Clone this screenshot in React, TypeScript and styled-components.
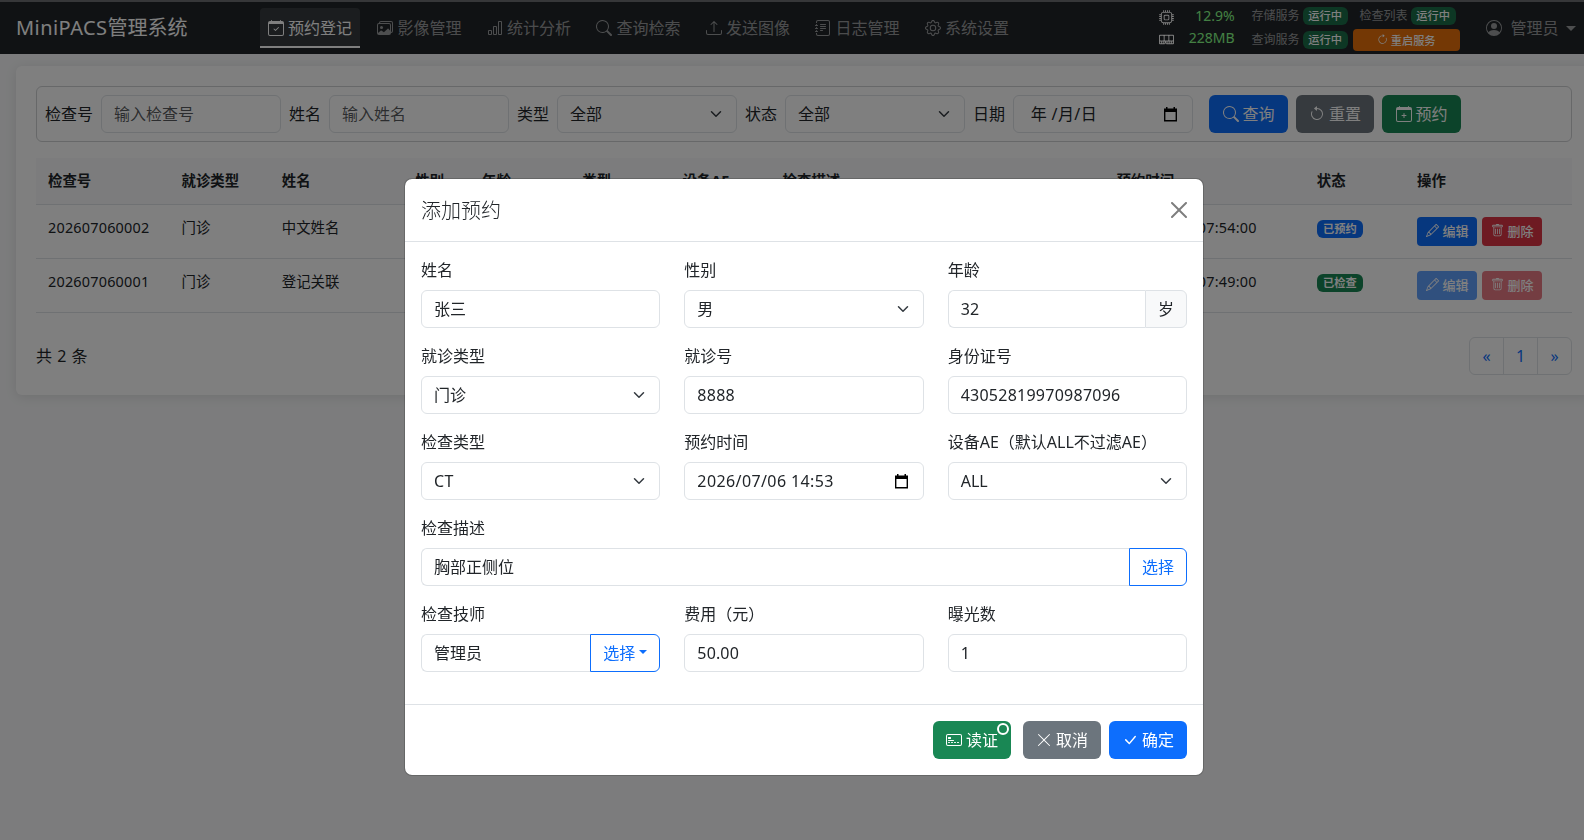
import React from "react";
import styled, { createGlobalStyle, css } from "styled-components";
import {
  BsArrowClockwise,
  BsArrowCounterclockwise,
  BsBarChart,
  BsCalendarCheck,
  BsCalendarPlus,
  BsCheckLg,
  BsCpu,
  BsCreditCard2Front,
  BsGear,
  BsImages,
  BsJournalText,
  BsMemory,
  BsPencil,
  BsPersonCircle,
  BsSearch,
  BsTrash,
  BsUpload,
  BsXLg,
} from "react-icons/bs";

const GlobalStyle = createGlobalStyle`
  *, *::before, *::after { box-sizing: border-box; }
  html { overflow: hidden; }
  body {
    margin: 0;
    height: 840px;
    overflow: hidden;
    background: #f8f9fa;
    color: #212529;
    font-family: "Noto Sans", "Noto Sans CJK SC", sans-serif;
    font-size: 16px;
    line-height: 24px;
  }
  button { font-family: inherit; }
`;

const Page = styled.div`
  width: 1608px;
  height: 840px;
  overflow: hidden;
`;

/* ---------- navbar ---------- */

const Navbar = styled.header`
  height: 54px;
  display: flex;
  align-items: center;
  background: #212529;
  border-top: 2px solid #6c6e72;
  padding: 0 0 0 16px;
`;

const Brand = styled.div`
  width: 244px;
  font-size: 20px;
  line-height: 30px;
  color: #fff;
  white-space: nowrap;
`;

const Nav = styled.nav`
  display: flex;
  gap: 9.8px;
`;

const NavItem = styled.a<{ $active?: boolean }>`
  width: 99.7px;
  height: 40px;
  display: flex;
  align-items: center;
  gap: 4px;
  padding: 0 8px;
  white-space: nowrap;
  color: ${(p) => (p.$active ? "#fff" : "rgba(255, 255, 255, 0.55)")};
  ${(p) =>
    p.$active &&
    css`
      background: rgba(255, 255, 255, 0.1);
      border-bottom: 2px solid #fff;
      border-radius: 4px 4px 0 0;
      padding-top: 2px;
    `}
  svg { flex: none; }
`;

const Metrics = styled.div`
  margin-left: 142px;
  width: 76px;
  display: grid;
  grid-template-rows: 22px 22px;
`;

const Metric = styled.div`
  display: flex;
  align-items: center;
  justify-content: space-between;
  font-size: 14px;
  line-height: 22px;
  color: #88ff88;
  svg { color: #fff; font-size: 15px; }
  span { padding-bottom: 2px; }
`;

const Services = styled.div`
  margin-left: 17px;
  width: 208px;
  display: grid;
  grid-template-columns: 101px 107px;
  grid-template-rows: 24px 24px;
  align-items: center;
`;

const Service = styled.div`
  display: flex;
  align-items: center;
  gap: 3px;
  font-size: 12px;
  color: rgba(255, 255, 255, 0.55);
  white-space: nowrap;
`;

const ServiceRight = styled(Service)`
  padding-left: 7px;
`;

const Badge = styled.span<{ $color: string }>`
  display: inline-flex;
  align-items: center;
  justify-content: center;
  height: 18px;
  width: 46px;
  border-radius: 6px;
  background: ${(p) => p.$color};
  color: #fff;
  font-size: 11.2px;
  font-weight: 700;
  line-height: 18px;
`;

const ServiceBadge = styled(Badge)`
  width: 45px;
  font-weight: 500;
`;

const RestartButton = styled.button`
  width: 107px;
  height: 22px;
  display: flex;
  align-items: center;
  justify-content: center;
  gap: 3px;
  border: 0;
  border-radius: 4px;
  background: #e8700a;
  color: #fff;
  font-size: 11.2px;
  font-weight: 500;
  padding: 0 0 1px;
`;

const UserMenu = styled.div`
  margin-left: 26px;
  display: flex;
  align-items: center;
  color: rgba(255, 255, 255, 0.55);
  white-space: nowrap;
  gap: 9px;
`;

const Caret = styled.span`
  border-top: 5px solid currentColor;
  border-left: 5px solid transparent;
  border-right: 5px solid transparent;
`;

const UserCaret = styled(Caret)`
  margin-left: -2px;
`;

/* ---------- main card ---------- */

const Card = styled.main`
  margin: 12px 16px 0;
  height: 329px;
  padding: 20px;
  background: #fff;
  border-radius: 6px;
  box-shadow: 0 2px 12px rgba(0, 0, 0, 0.1);
`;

const FilterBar = styled.section`
  height: 56px;
  display: flex;
  align-items: center;
  gap: 8px;
  padding: 0 8px;
  border: 1px solid #ced0d2;
  border-radius: 6px;
  white-space: nowrap;
`;

const Control = styled.div<{ $placeholder?: boolean; $joined?: boolean; $width?: number }>`
  height: 38px;
  ${(p) => (p.$width ? `width: ${p.$width}px; flex: none;` : "flex: 1; min-width: 0;")}
  display: flex;
  align-items: center;
  justify-content: space-between;
  padding: 0 12px;
  border: 1px solid #dee2e6;
  border-radius: ${(p) => (p.$joined ? "6px 0 0 6px" : "6px")};
  ${(p) => p.$joined && "border-right: 0;"}
  background: #fff;
  color: ${(p) => (p.$placeholder ? "rgba(33, 37, 41, 0.75)" : "#212529")};
`;

const Spaced = styled.span<{ $spacing?: number }>`
  letter-spacing: ${(p) => p.$spacing ?? 0.25}px;
`;

const Button = styled.button<{ $color: string; $width: number }>`
  position: relative;
  width: ${(p) => p.$width}px;
  height: 38px;
  display: flex;
  align-items: center;
  justify-content: center;
  gap: 4px;
  padding: 0;
  border: 0;
  border-radius: 6px;
  background: ${(p) => p.$color};
  color: #fff;
  font-size: 16px;
  line-height: 24px;
  svg { flex: none; }
`;

const FilterButtons = styled.div`
  display: flex;
  gap: 8px;
  margin-left: 8px;
`;

const Table = styled.div`
  margin-top: 16px;
  font-size: 14.4px;
  line-height: 21px;
`;

const Row = styled.div<{ $head?: boolean }>`
  display: grid;
  grid-template-columns: 4fr 3fr 4fr 2fr 3fr 3fr 3fr 10fr 6fr 3fr 5fr;
  height: ${(p) => (p.$head ? 47 : 54)}px;
  padding-top: 12px;
  border-bottom: 1px solid #dee2e6;
  background: ${(p) => (p.$head ? "#f8f9fa" : "#fff")};
  font-weight: ${(p) => (p.$head ? 700 : 400)};
`;

const Cell = styled.div`
  padding: 0 12px;
  min-width: 0;
  white-space: nowrap;
`;

const RowActions = styled.div`
  display: flex;
  gap: 5px;
`;

const SmallButton = styled.button<{ $color: string; $disabled?: boolean }>`
  width: 60px;
  height: 29px;
  display: flex;
  align-items: center;
  justify-content: center;
  gap: 4px;
  padding: 0 0 2px;
  border: 0;
  border-radius: 4px;
  background: ${(p) => p.$color};
  color: #fff;
  font-size: 13px;
  font-weight: 500;
  opacity: ${(p) => (p.$disabled ? 0.65 : 1)};
`;

const TableFooter = styled.div`
  margin-top: 24px;
  display: flex;
  justify-content: space-between;
  align-items: center;
  word-spacing: 1px;
`;

const Pager = styled.div`
  display: flex;
  width: 103px;
  height: 38px;
  border: 1px solid #dee2e6;
  border-radius: 6px;
  color: #0d6efd;
`;

const PageLink = styled.span`
  flex: 1;
  display: flex;
  align-items: center;
  justify-content: center;
  & + & { border-left: 1px solid #dee2e6; }
`;

/* ---------- modal ---------- */

const Backdrop = styled.div`
  position: fixed;
  top: 0;
  left: 0;
  width: 1608px;
  height: 840px;
  display: flex;
  justify-content: center;
  align-items: flex-start;
  padding-top: 178px;
  background: rgba(0, 0, 0, 0.5);
`;

const Dialog = styled.div`
  width: 800px;
  background: #fff;
  background-clip: padding-box;
  border: 1px solid rgba(0, 0, 0, 0.175);
  border-radius: 8px;
`;

const DialogHeader = styled.div`
  height: 63px;
  padding: 0 16px;
  display: flex;
  align-items: center;
  justify-content: space-between;
  border-bottom: 1px solid #dee2e6;
  font-size: 20px;
  line-height: 30px;
`;

const DialogTitle = styled.span`
  padding-top: 1px;
  font-weight: 300;
`;

const CloseIcon = styled.svg`
  width: 16px;
  height: 16px;
  opacity: 0.5;
`;

const FormGrid = styled.div`
  display: grid;
  grid-template-columns: repeat(3, 1fr);
  column-gap: 24px;
  row-gap: 16px;
  padding: 16px 16px 32px;
`;

const Field = styled.div<{ $wide?: boolean }>`
  display: grid;
  row-gap: 8px;
  grid-column: ${(p) => (p.$wide ? "1 / -1" : "auto")};
  min-width: 0;
  white-space: nowrap;
`;

const Group = styled.div`
  display: flex;
`;

const Unit = styled.span`
  width: 42px;
  height: 38px;
  display: flex;
  align-items: center;
  justify-content: center;
  border: 1px solid #dee2e6;
  border-radius: 0 6px 6px 0;
  background: #f8f9fa;
`;

const PickButton = styled.button<{ $width: number }>`
  width: ${(p) => p.$width}px;
  height: 38px;
  display: flex;
  align-items: center;
  justify-content: center;
  gap: 4px;
  padding: 0 0 2px;
  border: 1px solid #0d6efd;
  border-radius: 0 6px 6px 0;
  background: #fff;
  color: #0d6efd;
  font-size: 16px;
`;

const SmallCaret = styled(Caret)`
  border-top-width: 4px;
  border-left-width: 4px;
  border-right-width: 4px;
`;

const DialogFooter = styled.div`
  height: 71px;
  display: flex;
  justify-content: flex-end;
  align-items: center;
  gap: 8px;
  padding: 0 16px;
  border-top: 1px solid #dee2e6;
`;

const ReadButton = styled(Button)`
  margin-right: 4px;
`;

const StatusRing = styled.span`
  position: absolute;
  top: 2px;
  right: 2px;
  width: 12px;
  height: 12px;
  border: 2px solid #fff;
  border-radius: 50%;
`;

const Chevron = () => (
  <svg width="16" height="12" viewBox="0 0 16 16">
    <path fill="none" stroke="#343a40" strokeLinecap="round" strokeLinejoin="round" strokeWidth="2" d="m2 5 6 6 6-6" />
  </svg>
);

const PickerSvg = styled.svg`
  width: 13px;
  height: 15px;
  margin-right: 3px;
  flex: none;
`;

const DatePickerIcon = () => (
  <PickerSvg viewBox="0 0 13 15">
    <path fill="#000" fillRule="evenodd" d="M2 0h1.5v1.4h6V0H11v1.4h2V14.4H0V1.4h2zM1.4 5v8h10.2V5z" />
  </PickerSvg>
);

const navItems = [
  { icon: <BsCalendarCheck />, label: "预约登记", active: true },
  { icon: <BsImages />, label: "影像管理" },
  { icon: <BsBarChart />, label: "统计分析" },
  { icon: <BsSearch />, label: "查询检索" },
  { icon: <BsUpload />, label: "发送图像" },
  { icon: <BsJournalText />, label: "日志管理" },
  { icon: <BsGear />, label: "系统设置" },
];

const headings = ["检查号", "就诊类型", "姓名", "性别", "年龄", "类型", "设备AE", "检查描述", "预约时间", "状态", "操作"];

const records = [
  { id: "202607060002", visit: "门诊", name: "中文姓名", time: "2026-07-06 07:54:00", status: "已预约", color: "#0d6efd", locked: false },
  { id: "202607060001", visit: "门诊", name: "登记关联", time: "2026-07-06 07:49:00", status: "已检查", color: "#198754", locked: true },
];

type FieldProps = { label: string; value: React.ReactNode };

const SelectField = ({ label, value }: FieldProps) => (
  <Field>
    <span>{label}</span>
    <Control>
      {value}
      <Chevron />
    </Control>
  </Field>
);

const InputField = ({ label, value }: FieldProps) => (
  <Field>
    <span>{label}</span>
    <Control>{value}</Control>
  </Field>
);

export default function App() {
  return (
    <>
      <GlobalStyle />
      <Page>
        <Navbar>
          <Brand><Spaced $spacing={0.45}>MiniPACS</Spaced>管理系统</Brand>
          <Nav>
            {navItems.map((n) => (
              <NavItem key={n.label} $active={n.active}>
                {n.icon}
                {n.label}
              </NavItem>
            ))}
          </Nav>
          <Metrics>
            <Metric><BsCpu /><span>12.9%</span></Metric>
            <Metric><BsMemory /><span>228MB</span></Metric>
          </Metrics>
          <Services>
            <Service>存储服务<ServiceBadge $color="#1b6e49">运行中</ServiceBadge></Service>
            <ServiceRight>检查列表<ServiceBadge $color="#1b6e49">运行中</ServiceBadge></ServiceRight>
            <Service>查询服务<ServiceBadge $color="#1b6e49">运行中</ServiceBadge></Service>
            <RestartButton><BsArrowClockwise />重启服务</RestartButton>
          </Services>
          <UserMenu>
            <BsPersonCircle />
            <span>管理员</span>
            <UserCaret />
          </UserMenu>
        </Navbar>

        <Card>
          <FilterBar>
            <span>检查号</span>
            <Control $width={180} $placeholder>输入检查号</Control>
            <span>姓名</span>
            <Control $width={180} $placeholder>输入姓名</Control>
            <span>类型</span>
            <Control $width={180}>全部<Chevron /></Control>
            <span>状态</span>
            <Control $width={180}>全部<Chevron /></Control>
            <span>日期</span>
            <Control $width={180}><Spaced $spacing={0.4}>&nbsp;年 /月/日</Spaced><DatePickerIcon /></Control>
            <FilterButtons>
              <Button $color="#0d6efd" $width={79}><BsSearch />查询</Button>
              <Button $color="#6c757d" $width={78}><BsArrowCounterclockwise />重置</Button>
              <Button $color="#198754" $width={79}><BsCalendarPlus />预约</Button>
            </FilterButtons>
          </FilterBar>

          <Table>
            <Row $head>
              {headings.map((h) => <Cell key={h}>{h}</Cell>)}
            </Row>
            {records.map((r) => (
              <Row key={r.id}>
                <Cell><Spaced $spacing={0.22}>{r.id}</Spaced></Cell>
                <Cell>{r.visit}</Cell>
                <Cell>{r.name}</Cell>
                <Cell />
                <Cell />
                <Cell />
                <Cell />
                <Cell />
                <Cell><Spaced $spacing={0.22}>{r.time}</Spaced></Cell>
                <Cell><Badge $color={r.color}>{r.status}</Badge></Cell>
                <Cell>
                  <RowActions>
                    <SmallButton $color="#0d6efd" $disabled={r.locked}><BsPencil />编辑</SmallButton>
                    <SmallButton $color="#dc3545" $disabled={r.locked}><BsTrash />删除</SmallButton>
                  </RowActions>
                </Cell>
              </Row>
            ))}
          </Table>

          <TableFooter>
            <span>共 2 条</span>
            <Pager>
              <PageLink>«</PageLink>
              <PageLink>1</PageLink>
              <PageLink>»</PageLink>
            </Pager>
          </TableFooter>
        </Card>
      </Page>

      <Backdrop>
        <Dialog>
          <DialogHeader>
            <DialogTitle>添加预约</DialogTitle>
            <CloseIcon viewBox="0 0 16 16">
              <path d="M.293.293a1 1 0 0 1 1.414 0L8 6.586 14.293.293a1 1 0 1 1 1.414 1.414L9.414 8l6.293 6.293a1 1 0 0 1-1.414 1.414L8 9.414l-6.293 6.293a1 1 0 0 1-1.414-1.414L6.586 8 .293 1.707a1 1 0 0 1 0-1.414" />
            </CloseIcon>
          </DialogHeader>
          <FormGrid>
            <InputField label="姓名" value="张三" />
            <SelectField label="性别" value="男" />
            <Field>
              <span>年龄</span>
              <Group>
                <Control $joined><Spaced>32</Spaced></Control>
                <Unit>岁</Unit>
              </Group>
            </Field>
            <SelectField label="就诊类型" value="门诊" />
            <InputField label="就诊号" value={<Spaced>8888</Spaced>} />
            <InputField label="身份证号" value={<Spaced>43052819970987096</Spaced>} />
            <SelectField label="检查类型" value={<Spaced $spacing={0.4}>CT</Spaced>} />
            <Field>
              <span>预约时间</span>
              <Control>
                <Spaced $spacing={0.4}>2026/07/06 14:53</Spaced>
                <DatePickerIcon />
              </Control>
            </Field>
            <SelectField label="设备AE（默认ALL不过滤AE）" value="ALL" />
            <Field $wide>
              <span>检查描述</span>
              <Group>
                <Control $joined>胸部正侧位</Control>
                <PickButton $width={58}>选择</PickButton>
              </Group>
            </Field>
            <Field>
              <span>检查技师</span>
              <Group>
                <Control $joined>管理员</Control>
                <PickButton $width={70}>选择<SmallCaret /></PickButton>
              </Group>
            </Field>
            <InputField label="费用（元）" value={<Spaced $spacing={0.15}>50.00</Spaced>} />
            <InputField label="曝光数" value="1" />
          </FormGrid>
          <DialogFooter>
            <ReadButton $color="#198754" $width={78}><BsCreditCard2Front />读证<StatusRing /></ReadButton>
            <Button $color="#6c757d" $width={78}><BsXLg />取消</Button>
            <Button $color="#0d6efd" $width={78}><BsCheckLg />确定</Button>
          </DialogFooter>
        </Dialog>
      </Backdrop>
    </>
  );
}
